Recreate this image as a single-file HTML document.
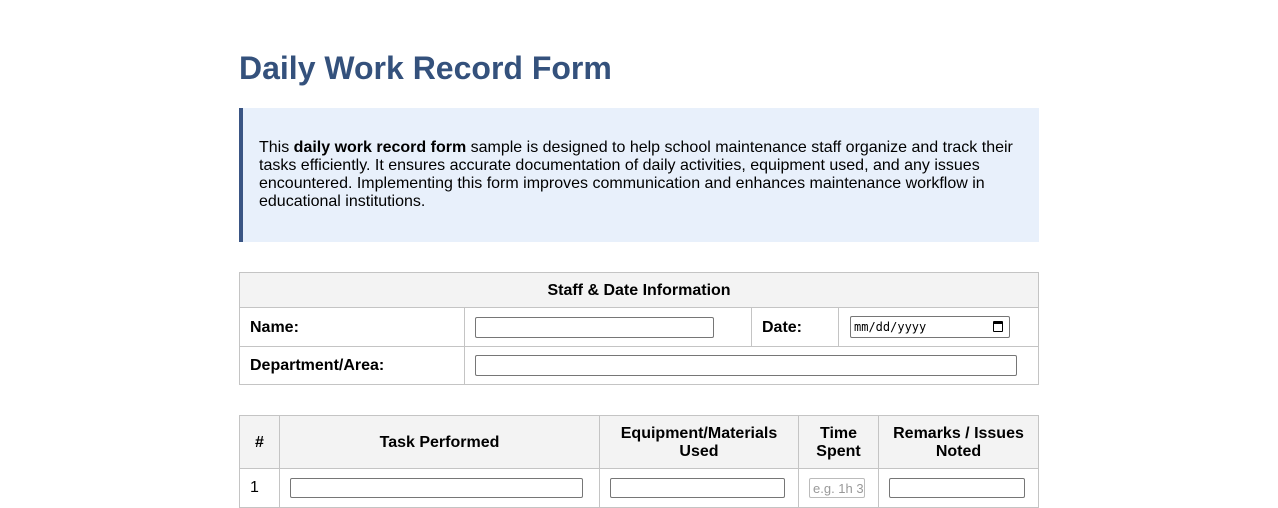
<!DOCTYPE html>
<html><head><meta charset="utf-8"><style>
*{box-sizing:border-box;margin:0;padding:0}
body{width:1278px;height:501px;overflow:hidden;background:#fff;font-family:"Liberation Sans",Arial,sans-serif;color:#000;position:relative}
.a{position:absolute}
h1{position:absolute;left:239px;top:49px;font-size:32px;font-weight:bold;color:#34517c;line-height:38px;white-space:nowrap}
.info{left:239px;top:108px;width:800px;height:134px;background:#e8f0fb;border-left:4px solid #3a5584;padding:31px 16px 0 16px;font-size:16px;line-height:18px}
.c{position:absolute;border:1px solid #c4c4c4;font-weight:bold;font-size:16px;display:flex;align-items:center;padding-left:10px;padding-top:1px}
.h{background:#f3f3f3;justify-content:center;padding:1px 0 0 0;text-align:center;line-height:18px}
.i{position:absolute;border:1px solid #767676;border-radius:2px;background:#fff}
</style></head><body>
<h1>Daily Work Record Form</h1>
<div class="a info">This <b>daily work record form</b> sample is designed to help school maintenance staff organize and track their tasks efficiently. It ensures accurate documentation of daily activities, equipment used, and any issues encountered. Implementing this form improves communication and enhances maintenance workflow in educational institutions.</div>

<div class="c h" style="left:239px;top:272px;width:800px;height:36px">Staff &amp; Date Information</div>
<div class="c" style="left:239px;top:307px;width:226px;height:40px">Name:</div>
<div class="c" style="left:464px;top:307px;width:288px;height:40px"></div>
<div class="c" style="left:751px;top:307px;width:88px;height:40px">Date:</div>
<div class="c" style="left:838px;top:307px;width:201px;height:40px"></div>
<div class="c" style="left:239px;top:346px;width:226px;height:39px">Department/Area:</div>
<div class="c" style="left:464px;top:346px;width:575px;height:39px"></div>
<div class="i" style="left:475px;top:317px;width:239px;height:21px"></div>
<div class="i" style="left:850px;top:316px;width:160px;height:22px;font-family:'DejaVu Sans Mono',monospace;font-size:12px;padding:3px 0 0 3px;color:#000">mm/dd/yyyy<span class="a" style="right:6px;top:4px;width:10px;height:11px;border:1.5px solid #000;border-top-width:3px;border-radius:1px"></span></div>
<div class="i" style="left:475px;top:355px;width:542px;height:21px"></div>

<div class="c h" style="left:239px;top:415px;width:41px;height:54px">#</div>
<div class="c h" style="left:279px;top:415px;width:321px;height:54px">Task Performed</div>
<div class="c h" style="left:599px;top:415px;width:200px;height:54px">Equipment/Materials<br>Used</div>
<div class="c h" style="left:798px;top:415px;width:81px;height:54px">Time<br>Spent</div>
<div class="c h" style="left:878px;top:415px;width:161px;height:54px">Remarks / Issues<br>Noted</div>
<div class="c" style="left:239px;top:468px;width:41px;height:40px;font-weight:normal;align-items:flex-start;padding-top:10px">1</div>
<div class="c" style="left:279px;top:468px;width:321px;height:40px"></div>
<div class="c" style="left:599px;top:468px;width:200px;height:40px"></div>
<div class="c" style="left:798px;top:468px;width:81px;height:40px"></div>
<div class="c" style="left:878px;top:468px;width:161px;height:40px"></div>
<div class="i" style="left:290px;top:478px;width:293px;height:20px"></div>
<div class="i" style="left:610px;top:478px;width:175px;height:20px"></div>
<div class="i" style="left:809px;top:478px;width:56px;height:20px;font-size:13px;color:#999;padding:2px 0 0 3px;overflow:hidden;white-space:nowrap;border-color:#bbb">e.g. 1h 30m</div>
<div class="i" style="left:889px;top:478px;width:136px;height:20px"></div>
</body></html>
